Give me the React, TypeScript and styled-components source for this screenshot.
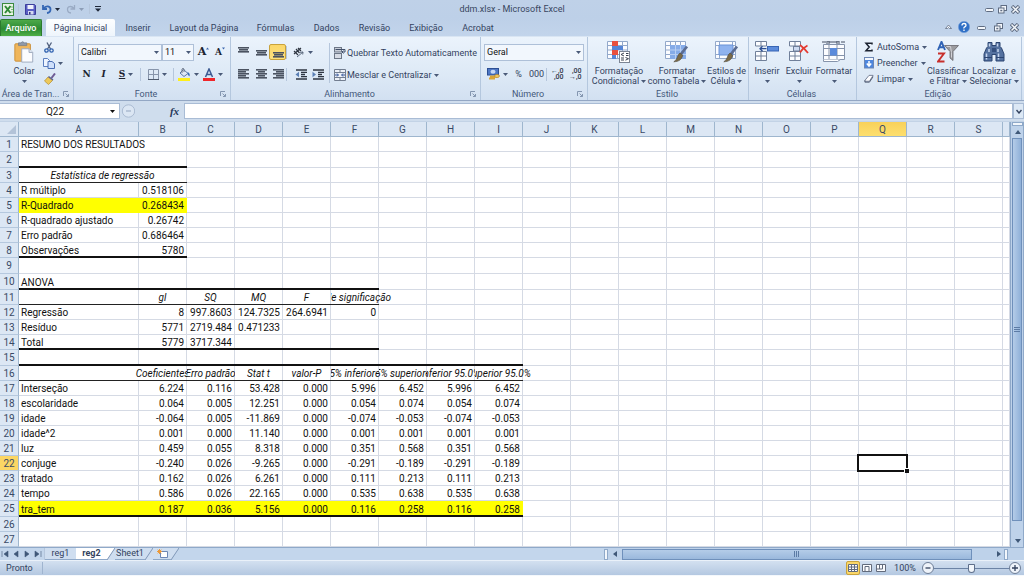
import React from "react";
import styled, { createGlobalStyle, css } from "styled-components";

const GlobalStyle = createGlobalStyle`
  *, *::before, *::after { box-sizing: border-box; }
  html, body { margin: 0; padding: 0; background: #fff; }
  body { font-family: Roboto, "Noto Sans", sans-serif; font-size: 9px; color: #33425e; overflow: hidden; }
  button, input, select { font: inherit; color: inherit; margin: 0; padding: 0; border: 0; background: none; border-radius: 0; }
  h1 { margin: 0; font-weight: 400; }
`;

/* ---------- shared parts ---------- */

const Window = styled.div`
  display: flex;
  flex-direction: column;
  min-height: 100vh;
  background: #fff;
`;

const Icon = styled.svg`
  display: block;
  flex: none;
`;

const Caret = ({ color = "#4a5a78" }: { color?: string }) => (
  <Icon width="5" height="3" viewBox="0 0 5 3" aria-hidden="true">
    <path d="M0 0h5L2.5 3z" fill={color} />
  </Icon>
);

const Row = styled.div<{ $gap?: number }>`
  display: flex;
  align-items: center;
  gap: ${(p) => p.$gap ?? 0}px;
`;

const ToolButton = styled.button<{ $w?: number; $active?: boolean }>`
  display: flex;
  align-items: center;
  justify-content: center;
  gap: 3px;
  width: ${(p) => p.$w ?? 17}px;
  height: 16px;
  flex: none;
  ${(p) =>
    p.$active &&
    css`
      background: linear-gradient(#fbd769, #fde17e);
      border: 1px solid #c9a33c;
      border-radius: 2px;
    `}
`;

const Separator = styled.span<{ $h?: number }>`
  width: 1px;
  height: ${(p) => p.$h ?? 13}px;
  flex: none;
  background: #b5c6dc;
`;

/* ---------- title bar ---------- */

const TitleBar = styled.header`
  display: grid;
  grid-template-columns: 1fr auto 1fr;
  align-items: center;
  height: 18px;
  padding: 0 2px;
  background: linear-gradient(#bfd1e8, #bdd0e8);
`;

const Title = styled.h1`
  font-size: 9px;
  line-height: 12px;
  color: #38465f;
`;

const WindowButtons = styled.div`
  display: flex;
  align-items: center;
  justify-content: flex-end;
`;

const MinimizeIcon = () => (
  <Icon width="9" height="9" viewBox="0 0 9 9">
    <rect x="0.5" y="3.5" width="8" height="3" rx="1" fill="#f4f7fb" stroke="#5f6c82" />
  </Icon>
);
const RestoreIcon = () => (
  <Icon width="9" height="9" viewBox="0 0 9 9">
    <rect x="3" y="0.5" width="5.5" height="5" fill="#f4f7fb" stroke="#5f6c82" />
    <rect x="0.5" y="3" width="5.5" height="5" fill="#f4f7fb" stroke="#5f6c82" />
    <rect x="2.3" y="4.8" width="2" height="1.5" fill="#5f6c82" />
  </Icon>
);
const CloseIcon = () => (
  <Icon width="9" height="9" viewBox="0 0 9 9">
    <path d="M1 1l7 7M8 1l-7 7" stroke="#5f6c82" strokeWidth="3.4" />
    <path d="M1.5 1.5l6 6M7.5 1.5l-6 6" stroke="#f4f7fb" strokeWidth="1.5" />
  </Icon>
);

const ExcelLogo = () => (
  <Icon width="12" height="13" viewBox="0 0 12 13">
    <rect x="0.5" y="0.5" width="11" height="12" fill="#e9f3e6" stroke="#3c8a3f" />
    <path d="M3 3l5.5 7M8.5 3L3 10" stroke="#2f8a35" strokeWidth="2" />
    <path d="M9 4h2M9 6.500h2M9 9h2" stroke="#7dba7d" />
  </Icon>
);
const SaveIcon = () => (
  <Icon width="11" height="11" viewBox="0 0 11 11">
    <path d="M0.500 0.500h9l1 1v9h-10z" fill="#5a5fc4" stroke="#3c3f9c" />
    <rect x="2.500" y="1" width="6" height="4" fill="#eef1fb" />
    <rect x="3" y="7" width="5.500" height="3.500" fill="#d5daf0" />
    <rect x="4" y="8" width="1.500" height="2.500" fill="#33357c" />
  </Icon>
);
const UndoIcon = ({ color }: { color: string }) => (
  <Icon width="10" height="10" viewBox="0 0 10 10">
    <path d="M1 1v4h4M1.500 4.500C4 1 8.500 2 8.500 5.200C8.500 7.500 7 8.800 5 9" fill="none" stroke={color} strokeWidth="1.8" />
  </Icon>
);
const RedoIcon = ({ color }: { color: string }) => (
  <Icon width="10" height="10" viewBox="0 0 10 10">
    <path d="M8.500 1v4h-4M8 4.500C5.500 1.500 1.500 2 1.500 5.200C1.500 7.500 3 8.800 5 9" fill="none" stroke={color} strokeWidth="1.3" />
  </Icon>
);
const CustomizeIcon = () => (
  <Icon width="6" height="6" viewBox="0 0 6 6">
    <path d="M0 0.500h6" stroke="#1f2838" />
    <path d="M0 2.500h6L3 5.700z" fill="#1f2838" />
  </Icon>
);

/* ---------- ribbon tabs ---------- */

const TabBar = styled.nav`
  display: flex;
  align-items: flex-end;
  height: 18px;
  padding-right: 2px;
  background: linear-gradient(#bdd0e8, #c2d4eb);
`;

const FileTab = styled.button`
  height: 17px;
  width: 42px;
  margin-right: 4px;
  font-weight: 500;
  color: #fff;
  border: 1px solid #2b7a2d;
  border-bottom: 0;
  border-radius: 2px 2px 0 0;
  background: linear-gradient(#4ea94a, #2c8a33 55%, #4fae45);
`;

const RibbonTab = styled.button<{ $active?: boolean; $w: number }>`
  width: ${(p) => p.$w}px;
  height: 17px;
  flex: none;
  white-space: nowrap;
  border-radius: 2px 2px 0 0;
  ${(p) => p.$active && "background: linear-gradient(#fdfeff, #eef5fc);"}
`;

const TabBarTools = styled.div`
  display: flex;
  align-items: center;
  align-self: center;
  margin-left: auto;
`;

/* ---------- ribbon ---------- */

const Ribbon = styled.section`
  display: flex;
  height: 65px;
  background: linear-gradient(#ebf3fc, #dde9f6 60%, #d2e0f1);
  border-top: 1px solid #d9e5f3;
  border-bottom: 1px solid #93a7c4;
`;

const Group = styled.section<{ $w: number }>`
  display: flex;
  flex-direction: column;
  width: ${(p) => p.$w}px;
  flex: none;
  border-right: 1px solid #b4c7de;
`;

const GroupBody = styled.div<{ $pad?: number }>`
  display: flex;
  flex: 1;
  padding: 2px ${(p) => p.$pad ?? 4}px 0;
`;

const GroupFooter = styled.div`
  display: flex;
  align-items: center;
  height: 13px;
  padding-right: 2px;
  line-height: 12px;
  text-align: center;
  white-space: nowrap;
  color: #44587a;
  & > span { flex: 1; }
`;

const LauncherButton = styled.button`
  display: grid;
  place-items: center;
  width: 10px;
  height: 9px;
`;

const Launcher = ({ name }: { name: string }) => (
  <LauncherButton aria-label={`Opções de ${name}`}>
    <Icon width="6" height="6" viewBox="0 0 6 6">
      <path d="M0.500 5V0.500H5M2.500 2.500l3 3M5.500 3v2.500H3" fill="none" stroke="#8496b0" />
    </Icon>
  </LauncherButton>
);

const Footer = ({ name, launcher }: { name: string; launcher?: boolean }) => (
  <GroupFooter>
    <span>{name}</span>
    {launcher && <Launcher name={name} />}
  </GroupFooter>
);

const Stack = styled.div<{ $w?: number }>`
  display: flex;
  flex-direction: column;
  padding-top: 2px;
  ${(p) => (p.$w ? `width: ${p.$w}px; flex: none;` : "flex: 1;")}
  & > ${Row} { height: 22px; }
`;

const SmallStack = styled.div<{ $w?: number }>`
  display: flex;
  flex-direction: column;
  ${(p) => p.$w && `width: ${p.$w}px; flex: none;`}
`;

const BigButton = styled.button<{ $w: number }>`
  display: flex;
  flex-direction: column;
  align-items: center;
  width: ${(p) => p.$w}px;
  height: 48px;
  flex: none;
  line-height: 10px;
  white-space: nowrap;
  & > svg:first-child { height: 22px; margin: 2px 0 3px; }
`;

const BigLine = styled.span`
  display: flex;
  align-items: center;
  gap: 2px;
  min-height: 10px;
`;

const TextButton = styled.button<{ $gap?: number }>`
  display: flex;
  align-items: center;
  gap: ${(p) => p.$gap ?? 3}px;
  height: 16px;
  white-space: nowrap;
`;

const SelectBox = styled.label<{ $w: number }>`
  position: relative;
  display: block;
  width: ${(p) => p.$w}px;
  flex: none;
  & > svg { position: absolute; right: 3px; top: 7px; pointer-events: none; }
`;

const Select = styled.select`
  display: block;
  appearance: none;
  width: 100%;
  height: 17px;
  padding: 0 2px;
  color: #111;
  background: #f2f7fd;
  border: 1px solid #aec0d8;
`;

const Glyph = styled.span<{ $size?: number; $style?: "italic" | "underline" }>`
  font-family: "DejaVu Serif", "Liberation Serif", serif;
  font-weight: 700;
  font-size: ${(p) => p.$size ?? 9}px;
  line-height: 12px;
  color: #1c2330;
  ${(p) => p.$style === "italic" && "font-style: italic;"}
  ${(p) => p.$style === "underline" && "text-decoration: underline;"}
`;

const Lines = ({ w, y = 0 }: { w: [number, number][]; y?: number }) => (
  <Icon width="12" height="11" viewBox="0 0 12 11">
    {w.map(([x, len], i) => (
      <rect key={i} x={x} y={y + i * 2} width={len} height="1.600" fill="#4b5361" />
    ))}
  </Icon>
);

const PasteIcon = () => (
  <Icon width="22" height="24" viewBox="0 0 22 24">
    <rect x="1" y="3" width="17" height="19" rx="1" fill="#efb65c" stroke="#c98c35" />
    <path d="M5 5V2h2.500q2-2.500 4 0H14v3z" fill="#8f99a8" stroke="#6e7888" strokeWidth="0.700" />
    <path d="M8.500 8.500h8l4 4v10.500h-12z" fill="#fbfcff" stroke="#9aa6bb" />
    <path d="M16.500 8.500v4h4" fill="#dfe6f2" stroke="#9aa6bb" />
  </Icon>
);
const CutIcon = () => (
  <Icon width="10" height="11" viewBox="0 0 10 11">
    <path d="M3 0.500L6.500 7M7.500 0.500L3.500 7" stroke="#4f5f7d" strokeWidth="1.300" />
    <circle cx="2.500" cy="8.500" r="1.700" fill="none" stroke="#2d5fae" strokeWidth="1.300" />
    <circle cx="7.500" cy="8.500" r="1.700" fill="none" stroke="#2d5fae" strokeWidth="1.300" />
  </Icon>
);
const CopyIcon = () => (
  <Icon width="12" height="11" viewBox="0 0 12 11">
    <path d="M0.500 0.500h4l2 2v6h-6z" fill="#eef4ff" stroke="#5c7fc0" />
    <path d="M5 3.500h4l2.500 2v5H5z" fill="#cfe0fb" stroke="#4a6fb5" />
  </Icon>
);
const BrushIcon = () => (
  <Icon width="12" height="12" viewBox="0 0 12 12">
    <path d="M11 0.500L7.500 5" stroke="#6d5a94" strokeWidth="2" />
    <path d="M4 4l4.500 3.500L4.500 11.500L0.500 8z" fill="#edc95a" stroke="#b48c2d" strokeWidth="0.700" />
    <path d="M4.500 3.500l4.500 3.500" stroke="#59618c" strokeWidth="1.400" />
  </Icon>
);
const BordersIcon = () => (
  <Icon width="11" height="11" viewBox="0 0 11 11">
    <path d="M0.500 0.500h10v10h-10zM5.500 0v11M0 5.500h11" fill="none" stroke="#8795ab" />
    <path d="M0 10.500h11" stroke="#4c586b" />
  </Icon>
);
const BucketIcon = () => (
  <Icon width="13" height="13" viewBox="0 0 13 13">
    <path d="M5.500 1.500l4.500 4L6 8.500L2 5z" fill="#dfe8f5" stroke="#5d79a5" />
    <path d="M4 5V1q1.500-1.500 2 0v3" fill="none" stroke="#6d7787" />
    <path d="M9.500 4q3 1 2 4.500q-2-1-2-4.500" fill="#3c6fb9" />
    <rect x="0" y="10" width="12" height="3" fill="#ffef1a" />
  </Icon>
);
const FontColorIcon = () => (
  <Icon width="12" height="13" viewBox="0 0 12 13">
    <path d="M2.500 9L6 1l3.500 8M4 6.500h4" fill="none" stroke="#3c5a92" strokeWidth="1.500" />
    <rect x="0" y="10" width="12" height="3" fill="#f0262a" />
  </Icon>
);
const OrientationIcon = () => (
  <Icon width="12" height="11" viewBox="0 0 12 11">
    <path d="M1 4l4 4M3 2l3.500 4M5 1l3 3M1 7l7-6" fill="none" stroke="#2f3642" strokeWidth="1.200" />
    <path d="M4 10l6-5M10 5l-3 0.300M10 5l-0.300 2.500" fill="none" stroke="#5d6b80" />
  </Icon>
);
const IndentIcon = ({ out }: { out?: boolean }) => (
  <Icon width="12" height="11" viewBox="0 0 12 11">
    <path d="M1 1h11M6 3.300h6M6 5.500h4M6 7.700h6M1 10h11" stroke="#2f3642" strokeWidth="1.300" />
    <path d={out ? "M4 2.800v5.400L0.500 5.500z" : "M0.500 2.800v5.400L4 5.500z"} fill="#5a7fb5" />
  </Icon>
);
const WrapIcon = () => (
  <Icon width="12" height="12" viewBox="0 0 12 12">
    <rect x="0.500" y="0.500" width="7" height="4.500" fill="#c9cfd9" stroke="#6d7787" />
    <rect x="0.500" y="6.500" width="7" height="5" fill="#d7dce5" stroke="#6d7787" />
    <path d="M1.500 2.500h9.500v2.500H8M9.500 3.500L8 5l1.500 1.500" fill="none" stroke="#42506a" />
  </Icon>
);
const MergeIcon = () => (
  <Icon width="12" height="12" viewBox="0 0 12 12">
    <path d="M0.500 0.500h11v11h-11zM0 3.500h12M0 8.500h12M6 0v3M6 9v3" fill="#eef2f8" stroke="#737e90" />
    <path d="M1 6h3M3 4.500L4.500 6L3 7.500M11 6H8M9 4.500L7.500 6L9 7.500" fill="none" stroke="#2d4f93" />
  </Icon>
);
const CurrencyIcon = () => (
  <Icon width="13" height="12" viewBox="0 0 13 12">
    <rect x="0.500" y="0.500" width="11" height="6.500" fill="#4f78c4" stroke="#2c4f94" />
    <ellipse cx="6" cy="3.700" rx="2.500" ry="2" fill="#c5d7f4" />
    <path d="M3 8.500h7M2 10.500h6" stroke="#d9a536" strokeWidth="1.800" />
    <ellipse cx="10" cy="8" rx="2.500" ry="1.500" fill="#f2cb62" stroke="#b78427" strokeWidth="0.700" />
  </Icon>
);
const DecimalText = styled.span`
  display: flex;
  flex-direction: column;
  align-items: flex-end;
  width: 13px;
  font-weight: 500;
  font-size: 7px;
  line-height: 6px;
  color: #2d3748;
`;

const gridLines = "M0.500 0.500h20v17h-20zM0 4.500h21M0 9h21M0 13.500h21M5.500 0v18M10.500 0v18M15.500 0v18";

const ConditionalIcon = () => (
  <Icon width="24" height="22" viewBox="0 0 24 22">
    <path d={gridLines} fill="#fbfcff" stroke="#93a9cb" />
    <path d="M5 0h6v5H5zM5 9h6v5H5z" fill="#e8503e" />
    <path d="M5 5h11v4H5zM5 14h4v4H5z" fill="#5685d6" />
    <rect x="12.500" y="10.500" width="10" height="11" fill="#fff" stroke="#7c8594" />
    <path d="M17 12l-3 1.500l3 1.500M18.500 16.500l3 1.200l-3 1.500M19 12.500h2.500M19 14.500h2.500M14 17h3M14 19h3" fill="none" stroke="#3a4250" />
  </Icon>
);
const Brush = () => (
  <>
    <path d="M22 5.500L16 13" stroke="#5b6c92" strokeWidth="2.800" />
    <path d="M15 12l2.800 2.300q-1.500 6.500-9 6.500q3-2 3.500-4.500q0.700-3 2.700-4.300" fill="#7a6a48" stroke="#4c4535" strokeWidth="0.600" />
  </>
);
const TableFormatIcon = () => (
  <Icon width="24" height="22" viewBox="0 0 24 22">
    <path d={gridLines} fill="#fbfcff" stroke="#93a9cb" />
    <path d="M5 4h16v14H5z" fill="#85abe8" />
    <path d="M5 9h16M5 13.500h16M10.500 4v14M15.500 4v14" stroke="#b8cff3" />
    <Brush />
  </Icon>
);
const CellStylesIcon = () => (
  <Icon width="24" height="22" viewBox="0 0 24 22">
    <path d="M0.500 0.500h20v17h-20zM0 4.500h21M0 13.500h21M4.500 0v18M17.500 0v18" fill="#fbfcff" stroke="#93a9cb" />
    <path d="M4 4h14v10H4z" fill="#8fb3ef" stroke="#6b93d6" />
    <Brush />
  </Icon>
);
const CellStack = () => (
  <path d="M0.500 0.500h11v4.500h-11zM6 0v5M0.500 10.500h11v9h-11zM0 15h12M6 10v10" fill="#fcfdff" stroke="#71809a" />
);
const InsertCellsIcon = () => (
  <Icon width="24" height="22" viewBox="0 0 24 22">
    <CellStack />
    <rect x="12.500" y="5.500" width="11" height="4.500" fill="#5b8bdb" stroke="#3865b4" />
    <path d="M11.500 7.700H5M7.500 5.200L5 7.700l2.500 2.500" fill="none" stroke="#2c4f94" strokeWidth="1.300" />
  </Icon>
);
const DeleteCellsIcon = () => (
  <Icon width="20" height="22" viewBox="0 0 20 22">
    <CellStack />
    <rect x="4.500" y="5.500" width="6" height="4.500" fill="#cfdcf3" stroke="#71809a" />
    <path d="M11 4q4 3 8 8M18.500 4.500q-5 2.500-7.500 7" fill="none" stroke="#e33b32" strokeWidth="1.800" />
  </Icon>
);
const FormatCellsIcon = () => (
  <Icon width="24" height="22" viewBox="0 0 24 22">
    <path d="M1.500 3.500h21v15h-21zM1 7.500h22M1 14.500h22M7 3v16M15 3v16" fill="#fcfdff" stroke="#8593ab" />
    <path d="M5 3V0h2v3M15 3V0h2v3M7 1h8M19 1h4M0 1h4" fill="none" stroke="#444f62" />
    <rect x="8" y="7" width="7" height="7.500" fill="#5b8bdb" />
    <path d="M1.500 18.500v2h14l3-2" fill="#fff" stroke="#8593ab" />
  </Icon>
);
const FillDownIcon = () => (
  <Icon width="10" height="12" viewBox="0 0 10 12">
    <rect x="0.500" y="0.500" width="9" height="10.500" fill="#4d86de" stroke="#6d87b5" />
    <rect x="1" y="1" width="8" height="2" fill="#f5f8fd" />
    <path d="M5 4v4M2.800 6.500L5 9l2.200-2.500" fill="none" stroke="#fff" strokeWidth="1.500" />
  </Icon>
);
const EraserIcon = () => (
  <Icon width="10" height="10" viewBox="0 0 11 10">
    <path d="M1 6.500L5.500 1h4.500L6 7.500H1z" fill="#fdfdff" stroke="#6d7890" />
    <path d="M1 6.500v2h5l4-6" fill="none" stroke="#4d5870" />
  </Icon>
);
const SumIcon = () => (
  <Icon width="10" height="10" viewBox="0 0 10 10">
    <path d="M8 2.500V1.300H2L5.200 5L2 8.700h6V7.500" fill="none" stroke="#1c2330" strokeWidth="1.500" />
  </Icon>
);
const SortFilterIcon = () => (
  <Icon width="22" height="22" viewBox="0 0 22 22">
    <path d="M1 9L4.500 0.800L8 9M2.500 6.300h4" fill="none" stroke="#2f62b4" strokeWidth="1.900" />
    <path d="M1 12.500h6L1 20.500h6.500" fill="none" stroke="#c8302c" strokeWidth="1.900" />
    <path d="M7.500 4.500h14l-5.500 6v9l-3-2.500v-6.500z" fill="#9b9b9f" stroke="#66666c" strokeWidth="0.800" />
    <path d="M9.500 5.500h4l1 6v5" fill="none" stroke="#d3d3d8" />
  </Icon>
);
const BinocularsIcon = () => (
  <Icon width="22" height="22" viewBox="0 0 22 22">
    <path d="M5 1.500h4v3h4v-3h4v4l1.500 1.500L21 13v7h-8v-6.500H9V20H1v-7l2.500-6L5 5.500z" fill="#54719f" stroke="#2b4470" />
    <path d="M6.500 2.500v3M3.500 12.500v6M14.500 2.500v3M15.500 12.500v6M6 8v3M15 8v3" stroke="#c5d5ee" strokeWidth="1.500" />
    <path d="M9 7h4v4H9z" fill="#35507f" />
    <path d="M1 16.500h8M13 16.500h8" stroke="#2b4470" />
  </Icon>
);

/* ---------- formula bar ---------- */

const FormulaBar = styled.section`
  display: flex;
  height: 21px;
  padding: 2px 0;
  background: #cfdded;
  border-bottom: 1px solid #c3d3e6;
`;

const NameBox = styled.label`
  display: flex;
  align-items: center;
  width: 120px;
  flex: none;
  padding-right: 4px;
  background: #fff;
  border: 1px solid #a9bcd5;
  border-left: 0;
`;

const NameInput = styled.input`
  flex: 1;
  min-width: 0;
  height: 14px;
  text-align: center;
  font-size: 10px;
  color: #222;
`;

const FormulaTools = styled.div`
  display: flex;
  align-items: center;
  justify-content: space-between;
  width: 64px;
  flex: none;
  padding: 0 4px 0 1px;
`;

const FxButton = styled.button`
  width: 11px;
  font-family: "Liberation Serif", serif;
  font-style: italic;
  font-weight: 700;
  font-size: 11px;
  line-height: 14px;
  color: #26375a;
`;

const FormulaInput = styled.input`
  flex: 1;
  min-width: 0;
  padding: 0 4px;
  background: #fff;
  border: 1px solid #a9bcd5;
`;

const ExpandButton = styled.button`
  display: grid;
  place-items: center;
  width: 11px;
  border: 1px solid #a9bcd5;
  background: #dce8f5;
`;

/* ---------- worksheet ---------- */

const SheetArea = styled.main`
  display: flex;
  flex: 1;
  border-right: 1px solid #8fa9c9;
`;

const GridViewport = styled.div`
  flex: 1;
  min-width: 0;
  overflow: hidden;
`;

const Grid = styled.table`
  width: 100%;
  min-width: 990px;
  table-layout: fixed;
  border-collapse: separate;
  border-spacing: 0;
  font-size: 10px;
  line-height: 13px;
  color: #111;
`;

const Col = styled.col<{ $w?: number }>`
  ${(p) => p.$w && `width: ${p.$w}px;`}
`;

const ColumnHead = styled.th<{ $active?: boolean }>`
  height: 15px;
  padding: 0;
  font-weight: 400;
  color: #3a4a66;
  text-align: center;
  border-right: 1px solid #9eb6ce;
  border-bottom: 1px solid #9eb6ce;
  background: ${(p) => (p.$active ? "linear-gradient(#f8d15a, #fddf6e)" : "#dce7f4")};
`;

const RowHead = styled.th<{ $active?: boolean }>`
  padding: 0;
  font-weight: 400;
  color: #3a4a66;
  text-align: center;
  border-right: 1px solid #9eb6ce;
  border-bottom: 1px solid #b5c8de;
  background: ${(p) => (p.$active ? "#fbd664" : "#dce7f4")};
`;

const GridRow = styled.tr<{ $tall?: boolean }>`
  height: ${(p) => (p.$tall ? 16 : 15)}px;
`;

type Edge = "thick" | "thin";

/* Rules are inset shadows so that neighbouring cells join without a notch. */
const Cell = styled.td<{ $edge?: Edge; $fill?: boolean; $num?: boolean; $spill?: boolean }>`
  position: relative;
  padding: 0 3px 0 2px;
  white-space: nowrap;
  text-align: ${(p) => (p.$num ? "right" : "left")};
  background: ${(p) => (p.$fill ? "#ffff00" : "#fff")};
  box-shadow: ${(p) => {
    const bottom = p.$edge === "thick" ? "inset 0 -2px #111" : p.$edge === "thin" ? "inset 0 -1px #222" : p.$fill ? "" : "inset 0 -1px #d5dae4";
    const right = p.$fill || p.$spill ? "" : "inset -1px 0 #d5dae4";
    return [bottom, right].filter(Boolean).join(", ") || "none";
  }};
  ${(p) => p.$spill && "z-index: 1;"}
`;

/* A heading wider than its column is cut at both edges, or spills where the neighbour is empty. */
const Heading = styled.div<{ $open?: "left" | "right" }>`
  position: relative;
  z-index: 2;
  display: flex;
  justify-content: center;
  margin: 0 -3px 0 -2px;
  padding-right: 1px;
  font-style: italic;
  ${(p) =>
    p.$open
      ? `clip-path: inset(0 ${p.$open === "right" ? "-40px" : "0"} 0 ${p.$open === "left" ? "-40px" : "0"});`
      : "overflow: hidden;"}
`;

const Selection = styled.div`
  position: absolute;
  inset: -2px -1px -1px -2px;
  z-index: 1;
  border: 2px solid #111;
  &::after {
    content: "";
    position: absolute;
    right: -3px;
    bottom: -3px;
    width: 4px;
    height: 4px;
    background: #111;
    border-left: 1px solid #fff;
    border-top: 1px solid #fff;
    box-sizing: content-box;
  }
`;

const letters = "ABCDEFGHIJKLMNOPQRS".split("");

const data: Record<number, string[]> = {
  1: ["RESUMO DOS RESULTADOS"],
  3: ["Estatística de regressão"],
  4: ["R múltiplo", "0.518106"],
  5: ["R-Quadrado", "0.268434"],
  6: ["R-quadrado ajustado", "0.26742"],
  7: ["Erro padrão", "0.686464"],
  8: ["Observações", "5780"],
  10: ["ANOVA"],
  11: ["", "gl", "SQ", "MQ", "F", "F de significação"],
  12: ["Regressão", "8", "997.8603", "124.7325", "264.6941", "0"],
  13: ["Resíduo", "5771", "2719.484", "0.471233"],
  14: ["Total", "5779", "3717.344"],
  16: ["", "Coeficientes", "Erro padrão", "Stat t", "valor-P", "95% inferiores", "95% superiores", "Inferior 95.0%", "Superior 95.0%"],
  17: ["Interseção", "6.224", "0.116", "53.428", "0.000", "5.996", "6.452", "5.996", "6.452"],
  18: ["escolaridade", "0.064", "0.005", "12.251", "0.000", "0.054", "0.074", "0.054", "0.074"],
  19: ["idade", "-0.064", "0.005", "-11.869", "0.000", "-0.074", "-0.053", "-0.074", "-0.053"],
  20: ["idade^2", "0.001", "0.000", "11.140", "0.000", "0.001", "0.001", "0.001", "0.001"],
  21: ["luz", "0.459", "0.055", "8.318", "0.000", "0.351", "0.568", "0.351", "0.568"],
  22: ["conjuge", "-0.240", "0.026", "-9.265", "0.000", "-0.291", "-0.189", "-0.291", "-0.189"],
  23: ["tratado", "0.162", "0.026", "6.261", "0.000", "0.111", "0.213", "0.111", "0.213"],
  24: ["tempo", "0.586", "0.026", "22.165", "0.000", "0.535", "0.638", "0.535", "0.638"],
  25: ["tra_tem", "0.187", "0.036", "5.156", "0.000", "0.116", "0.258", "0.116", "0.258"],
};

/* Bottom rules: row number -> style and how many columns it runs under. */
const rules: Record<number, { edge: Edge; span: number }> = {
  2: { edge: "thick", span: 2 },
  3: { edge: "thin", span: 2 },
  8: { edge: "thick", span: 2 },
  10: { edge: "thick", span: 6 },
  11: { edge: "thin", span: 6 },
  14: { edge: "thick", span: 6 },
  15: { edge: "thick", span: 9 },
  16: { edge: "thin", span: 9 },
  25: { edge: "thick", span: 9 },
};
const filled: Record<number, number> = { 5: 2, 25: 9 };
const tallRows = new Set([2, 9, 10, 15, 25]);

const SheetRow = ({ n }: { n: number }) => {
  const values = data[n] ?? [];
  const rule = rules[n];
  const cells: React.ReactNode[] = [];
  for (let c = 0; c < 20; c++) {
    const value = values[c] ?? "";
    const heading = (n === 11 || n === 16) && c > 0 && value;
    const last = c === values.length - 1;
    if (n === 3 && c === 0) {
      cells.push(
        <Cell key={c} colSpan={2} $edge="thin">
          <Heading>{value}</Heading>
        </Cell>,
      );
      c = 1;
      continue;
    }
    cells.push(
      <Cell
        key={c}
        $edge={rule && c < rule.span ? rule.edge : undefined}
        $fill={c < (filled[n] ?? 0)}
        $num={c > 0 && !heading}
        $spill={(n === 1 && c === 0) || (n === 16 && c === 0)}
      >
        {heading ? <Heading $open={last ? "right" : c === 1 ? "left" : undefined}>{value}</Heading> : value}
        {n === 22 && c === 16 && <Selection />}
      </Cell>,
    );
  }
  return (
    <GridRow $tall={tallRows.has(n)}>
      <RowHead scope="row" $active={n === 22}>
        {n}
      </RowHead>
      {cells}
    </GridRow>
  );
};

/* ---------- scroll bars ---------- */

const VScroll = styled.div`
  display: flex;
  flex-direction: column;
  width: 13px;
  flex: none;
  padding: 0 1px;
  background: #bed2ea;
  border-left: 1px solid #8fa9c9;
`;

const HScroll = styled.div`
  display: flex;
  align-items: center;
  flex: 1;
  padding: 1px 16px 1px 0;
  background: #bed2ea;
`;

const ScrollButton = styled.button<{ $w?: number }>`
  display: grid;
  place-items: center;
  width: ${(p) => p.$w ?? 11}px;
  height: 12px;
  flex: none;
`;

const SplitHandle = styled.span<{ $vertical?: boolean }>`
  flex: none;
  width: ${(p) => (p.$vertical ? 4 : 11)}px;
  height: ${(p) => (p.$vertical ? 11 : 4)}px;
  background: #f2f6fb;
  border: 1px solid #8fa9c9;
`;

const VThumb = styled.div`
  display: grid;
  place-items: center;
  flex: 1;
  margin-bottom: 14px;
  background: linear-gradient(90deg, #b4cce8, #8fb0d8);
  border: 1px solid #6f90bb;
`;

const HThumb = styled.div`
  display: grid;
  place-items: center;
  flex: 1;
  height: 11px;
  margin-right: 21px;
  background: linear-gradient(#b4cce8, #9ab8dc);
  border: 1px solid #6f90bb;
`;

const Arrow = ({ dir }: { dir: "up" | "down" | "left" | "right" }) => {
  const d = { up: "M0 5h6L3 1z", down: "M0 1h6L3 5z", left: "M5 0v6L1 3z", right: "M1 0v6l4-3z" }[dir];
  return (
    <Icon width="6" height="6" viewBox="0 0 6 6">
      <path d={d} fill="#3f5878" />
    </Icon>
  );
};

/* ---------- sheet tabs ---------- */

const BottomBar = styled.div`
  display: flex;
  height: 13px;
  border-top: 1px solid #8fa9c9;
  background: #c3d6ec;
`;

const SheetTabs = styled.div`
  display: flex;
  flex: 0 0 59%;
`;

const NavButton = styled.button`
  display: grid;
  place-items: center;
  width: 10px;
  height: 12px;
  margin-right: 1px;
`;

const SheetTab = styled.button<{ $active?: boolean; $w: number }>`
  width: ${(p) => p.$w}px;
  height: 12px;
  line-height: 11px;
  font-weight: ${(p) => (p.$active ? 700 : 400)};
  background: ${(p) => (p.$active ? "#fff" : "#cfdef0")};
  border-bottom: 1px solid #8fa9c9;
  display: grid;
  place-items: center;
`;

const SlantEdge = styled.svg`
  display: block;
  flex: none;
  width: 8px;
  height: 12px;
`;

const Slant = ({ left, right }: { left: string; right: string }) => (
  <SlantEdge viewBox="0 0 8 12">
    <path d="M0 0h8L0 12z" fill={left} />
    <path d="M8 0v12H0z" fill={right} />
    <path d="M8 0L0 12" stroke="#8098b8" />
  </SlantEdge>
);

const nav = [
  ["Primeira planilha", "M1 1v6M7 1v6L3 4z"],
  ["Planilha anterior", "M6 1v6L2 4z"],
  ["Próxima planilha", "M2 1v6l4-3z"],
  ["Última planilha", "M1 1v6l4-3zM7 1v6"],
];

/* ---------- status bar ---------- */

const StatusBar = styled.footer`
  display: flex;
  align-items: center;
  height: 16px;
  padding: 0 3px 0 6px;
  background: linear-gradient(#d3e0f0, #b4c8e1);
  border-top: 1px solid #eaf1f9;
  border-bottom: 1px solid #f4f8fc;
`;

const StatusText = styled.span`
  padding-right: 9px;
  border-right: 1px solid #9fb4cf;
  line-height: 12px;
`;

const StatusRight = styled.div`
  display: flex;
  align-items: center;
  margin-left: auto;
`;

const ViewButton = styled.button<{ $active?: boolean }>`
  display: grid;
  place-items: center;
  width: 14px;
  height: 14px;
  ${(p) => p.$active && "background: #fbd769; border: 1px solid #c9a33c; border-radius: 2px;"}
`;

const ViewIcon = ({ d }: { d: string }) => (
  <Icon width="10" height="8" viewBox="0 0 10 8">
    <path d={d} fill="#fbfcfe" stroke="#626b7c" />
  </Icon>
);

const ZoomLabel = styled.label`
  width: 34px;
  text-align: center;
  line-height: 12px;
`;

const RoundButton = styled.button`
  display: grid;
  place-items: center;
  width: 12px;
  height: 12px;
  border-radius: 50%;
  border: 1px solid #6c7c95;
  background: #eef3fa;
`;

const ZoomSlider = styled.input`
  appearance: none;
  width: 75px;
  height: 12px;
  background: linear-gradient(#6c83a5, #6c83a5) center / 100% 1px no-repeat;
  &::-webkit-slider-thumb {
    appearance: none;
    width: 7px;
    height: 9px;
    border: 1px solid #5e6f8b;
    border-radius: 1px 1px 4px 4px;
    background: #f2f6fb;
  }
`;

const ribbonTabs: [string, number][] = [
  ["Inserir", 46],
  ["Layout da Página", 86],
  ["Fórmulas", 57],
  ["Dados", 45],
  ["Revisão", 51],
  ["Exibição", 52],
  ["Acrobat", 52],
];

export default function App() {
  return (
    <Window>
      <GlobalStyle />
      <TitleBar>
        <Row $gap={4}>
          <ExcelLogo />
          <Separator $h={10} />
          <ToolButton aria-label="Salvar" $w={14}><SaveIcon /></ToolButton>
          <ToolButton aria-label="Desfazer" $w={20}><UndoIcon color="#3567b4" /><Caret color="#1f2838" /></ToolButton>
          <ToolButton aria-label="Refazer" $w={20}><RedoIcon color="#9aabc4" /><Caret color="#8c9db6" /></ToolButton>
          <Separator $h={10} />
          <ToolButton aria-label="Personalizar" $w={8}><CustomizeIcon /></ToolButton>
        </Row>
        <Title>ddm.xlsx - Microsoft Excel</Title>
        <WindowButtons>
          <ToolButton aria-label="Minimizar" $w={14}><MinimizeIcon /></ToolButton>
          <ToolButton aria-label="Restaurar" $w={13}><RestoreIcon /></ToolButton>
          <ToolButton aria-label="Fechar" $w={13}><CloseIcon /></ToolButton>
        </WindowButtons>
      </TitleBar>

      <TabBar>
        <FileTab>Arquivo</FileTab>
        <RibbonTab $active $w={69}>Página Inicial</RibbonTab>
        {ribbonTabs.map(([name, w]) => (
          <RibbonTab key={name} $w={w}>{name}</RibbonTab>
        ))}
        <TabBarTools>
          <ToolButton aria-label="Minimizar faixa" $w={14}>
            <Icon width="7" height="6" viewBox="0 0 7 6"><path d="M0.500 4.500L3.500 1l3 3.500h-2L3.500 3.500l-1 1z" fill="#f4f7fb" stroke="#5f6c82" strokeWidth="0.800" /></Icon>
          </ToolButton>
          <ToolButton aria-label="Ajuda" $w={18}>
            <Icon width="12" height="12" viewBox="0 0 12 12">
              <circle cx="6" cy="6" r="5.700" fill="#2f6fc6" stroke="#7aa3dc" strokeWidth="0.600" />
              <path d="M4 4.500q0-2 2-2t2 1.800q0 1-1.200 1.600T6 7.500M6 8.600v1.400" fill="none" stroke="#fff" strokeWidth="1.300" />
            </Icon>
          </ToolButton>
          <ToolButton aria-label="Minimizar pasta"><MinimizeIcon /></ToolButton>
          <ToolButton aria-label="Restaurar pasta" $w={16}><RestoreIcon /></ToolButton>
          <ToolButton aria-label="Fechar pasta" $w={16}><CloseIcon /></ToolButton>
        </TabBarTools>
      </TabBar>

      <Ribbon>
        <Group $w={74}>
          <GroupBody $pad={5}>
            <BigButton $w={38}>
              <PasteIcon />
              <BigLine>Colar</BigLine>
              <BigLine><Caret /></BigLine>
            </BigButton>
            <SmallStack>
              <ToolButton aria-label="Recortar" $w={12}><CutIcon /></ToolButton>
              <ToolButton aria-label="Copiar" $w={20}><CopyIcon /><Caret /></ToolButton>
              <ToolButton aria-label="Pincel de formatação" $w={13}><BrushIcon /></ToolButton>
            </SmallStack>
          </GroupBody>
          <Footer name="Área de Tran..." launcher />
        </Group>

        <Group $w={157}>
          <GroupBody>
            <Stack>
              <Row>
                <SelectBox $w={84}><Select aria-label="Fonte" defaultValue="Calibri"><option>Calibri</option></Select><Caret /></SelectBox>
                <SelectBox $w={32}><Select aria-label="Tamanho da fonte" defaultValue="11"><option>11</option></Select><Caret /></SelectBox>
                <ToolButton aria-label="Aumentar fonte" $w={19}><Row><Glyph $size={11}>A</Glyph><Icon width="3" height="10" viewBox="0 0 3 10"><path d="M0 2.500L1.500 0.500L3 2.500z" fill="#3b65ad" /></Icon></Row></ToolButton>
                <ToolButton aria-label="Diminuir fonte" $w={14}><Row><Glyph>A</Glyph><Icon width="3" height="10" viewBox="0 0 3 10"><path d="M0 0.500L1.500 2.500L3 0.500z" fill="#3b65ad" /></Icon></Row></ToolButton>
              </Row>
              <Row>
                <ToolButton aria-label="Negrito"><Glyph>N</Glyph></ToolButton>
                <ToolButton aria-label="Itálico"><Glyph $style="italic">I</Glyph></ToolButton>
                <ToolButton aria-label="Sublinhado" $w={28}><Glyph $style="underline">S</Glyph><Caret /></ToolButton>
                <Separator />
                <ToolButton aria-label="Bordas" $w={32}><BordersIcon /><Caret /></ToolButton>
                <Separator />
                <ToolButton aria-label="Cor de preenchimento" $w={28}><BucketIcon /><Caret /></ToolButton>
                <ToolButton aria-label="Cor da fonte" $w={22}><FontColorIcon /><Caret /></ToolButton>
              </Row>
            </Stack>
          </GroupBody>
          <Footer name="Fonte" launcher />
        </Group>

        <Group $w={250}>
          <GroupBody $pad={3}>
            <Stack $w={95}>
              <Row>
                <ToolButton aria-label="Alinhar em cima" $w={18}><Lines w={[[1, 11], [2, 9], [1, 11]]} y={0} /></ToolButton>
                <ToolButton aria-label="Alinhar no meio"><Lines w={[[1, 11], [2, 9], [1, 11]]} y={3} /></ToolButton>
                <ToolButton aria-label="Alinhar embaixo" $active><Lines w={[[1, 11], [2, 9], [1, 11]]} y={5} /></ToolButton>
                <Row $gap={4}><Separator /><Separator $h={0} /></Row>
                <ToolButton aria-label="Orientação" $w={22}><OrientationIcon /><Caret /></ToolButton>
              </Row>
              <Row>
                <ToolButton aria-label="Alinhar à esquerda" $w={18}><Lines w={[[1, 11], [1, 8], [1, 11], [1, 8], [1, 11]]} /></ToolButton>
                <ToolButton aria-label="Centralizar"><Lines w={[[1, 11], [3, 7], [1, 11], [3, 7], [1, 11]]} /></ToolButton>
                <ToolButton aria-label="Alinhar à direita"><Lines w={[[1, 11], [4, 8], [1, 11], [4, 8], [1, 11]]} /></ToolButton>
                <Row $gap={4}><Separator /><Separator $h={0} /></Row>
                <ToolButton aria-label="Diminuir recuo"><IndentIcon out /></ToolButton>
                <ToolButton aria-label="Aumentar recuo"><IndentIcon /></ToolButton>
              </Row>
            </Stack>
            <Row $gap={4}>
              <Separator $h={40} />
              <Stack>
                <Row><TextButton $gap={1}><WrapIcon />Quebrar Texto Automaticamente</TextButton></Row>
                <Row><TextButton $gap={1}><MergeIcon />Mesclar e Centralizar <Separator $h={0} /><Caret /></TextButton></Row>
              </Stack>
            </Row>
          </GroupBody>
          <Footer name="Alinhamento" launcher />
        </Group>

        <Group $w={107}>
          <GroupBody $pad={3}>
            <Stack>
              <Row>
                <SelectBox $w={100}><Select aria-label="Formato de número" defaultValue="Geral"><option>Geral</option></Select><Caret /></SelectBox>
              </Row>
              <Row>
                <ToolButton aria-label="Formato de contabilização" $w={26}><CurrencyIcon /><Caret /></ToolButton>
                <ToolButton aria-label="Porcentagem">%</ToolButton>
                <ToolButton aria-label="Milhares" $w={19}>000</ToolButton>
                <Separator />
                <ToolButton aria-label="Aumentar casas decimais" $w={20}><DecimalText><span>←,0</span><span>,00</span></DecimalText></ToolButton>
                <ToolButton aria-label="Diminuir casas decimais" $w={16}><DecimalText><span>,00</span><span>→,0</span></DecimalText></ToolButton>
              </Row>
            </Stack>
          </GroupBody>
          <Footer name="Número" launcher />
        </Group>

        <Group $w={161}>
          <GroupBody $pad={3}>
            <BigButton $w={56}><ConditionalIcon /><BigLine>Formatação</BigLine><BigLine>Condicional <Caret /></BigLine></BigButton>
            <BigButton $w={60}><TableFormatIcon /><BigLine>Formatar</BigLine><BigLine>como Tabela <Caret /></BigLine></BigButton>
            <BigButton $w={39}><CellStylesIcon /><BigLine>Estilos de</BigLine><BigLine>Célula <Caret /></BigLine></BigButton>
          </GroupBody>
          <Footer name="Estilo" />
        </Group>

        <Group $w={108}>
          <GroupBody $pad={2}>
            <BigButton $w={32}><InsertCellsIcon /><BigLine>Inserir</BigLine><BigLine><Caret /></BigLine></BigButton>
            <BigButton $w={32}><DeleteCellsIcon /><BigLine>Excluir</BigLine><BigLine><Caret /></BigLine></BigButton>
            <BigButton $w={38}><FormatCellsIcon /><BigLine>Formatar</BigLine><BigLine><Caret /></BigLine></BigButton>
          </GroupBody>
          <Footer name="Células" />
        </Group>

        <Group $w={165}>
          <GroupBody $pad={7}>
            <SmallStack $w={62}>
              <TextButton><SumIcon />AutoSoma <Caret /></TextButton>
              <TextButton><FillDownIcon />Preencher <Caret /></TextButton>
              <TextButton><EraserIcon />Limpar <Caret /></TextButton>
            </SmallStack>
            <BigButton $w={44}><SortFilterIcon /><BigLine>Classificar</BigLine><BigLine>e Filtrar <Caret /></BigLine></BigButton>
            <BigButton $w={48}><BinocularsIcon /><BigLine>Localizar e</BigLine><BigLine>Selecionar <Caret /></BigLine></BigButton>
          </GroupBody>
          <Footer name="Edição" />
        </Group>
      </Ribbon>

      <FormulaBar>
        <NameBox>
          <NameInput aria-label="Caixa de nome" defaultValue="Q22" />
          <Caret color="#111" />
        </NameBox>
        <FormulaTools>
          <Icon width="14" height="14" viewBox="0 0 14 14">
            <circle cx="7.500" cy="7" r="6.200" fill="#dbe6f3" stroke="#aabbd2" />
            <path d="M5 7h5" stroke="#93a5bf" />
          </Icon>
          <FxButton aria-label="Inserir função">fx</FxButton>
        </FormulaTools>
        <FormulaInput aria-label="Barra de fórmulas" />
        <ExpandButton aria-label="Expandir barra de fórmulas">
          <Icon width="6" height="5" viewBox="0 0 6 5"><path d="M0.500 1L3 4l2.500-3" fill="none" stroke="#33425e" strokeWidth="1.400" /></Icon>
        </ExpandButton>
      </FormulaBar>

      <SheetArea>
        <GridViewport>
          <Grid>
            <colgroup>
              <Col $w={19} />
              <Col $w={120} />
              {letters.slice(1).map((l) => <Col key={l} $w={48} />)}
              <Col />
            </colgroup>
            <thead>
              <tr>
                <ColumnHead aria-label="Selecionar tudo">
                  <Icon width="18" height="14" viewBox="0 0 18 14"><path d="M16 3v9H7z" fill="#b3c3d8" /></Icon>
                </ColumnHead>
                {letters.map((l) => <ColumnHead key={l} scope="col" $active={l === "Q"}>{l}</ColumnHead>)}
                <ColumnHead />
              </tr>
            </thead>
            <tbody>
              {Array.from({ length: 27 }, (_, i) => <SheetRow key={i} n={i + 1} />)}
            </tbody>
          </Grid>
        </GridViewport>
        <VScroll>
          <SplitHandle />
          <ScrollButton aria-label="Rolar para cima"><Arrow dir="up" /></ScrollButton>
          <VThumb><Icon width="6" height="6" viewBox="0 0 6 6"><path d="M0 0.500h6M0 2.500h6M0 4.500h6" stroke="#5c7ba5" /></Icon></VThumb>
          <ScrollButton aria-label="Rolar para baixo"><Arrow dir="down" /></ScrollButton>
        </VScroll>
      </SheetArea>

      <BottomBar>
        <SheetTabs>
          {nav.map(([name, d]) => (
            <NavButton key={name} aria-label={name}>
              <Icon width="8" height="8" viewBox="0 0 8 8"><path d={d} fill="#3f5878" stroke="#3f5878" strokeWidth="0.600" /></Icon>
            </NavButton>
          ))}
          <Separator $h={12} />
          <SheetTab $w={31}>reg1</SheetTab>
          <SheetTab $w={31} $active>reg2</SheetTab>
          <Slant left="#fff" right="#cfdef0" />
          <SheetTab $w={30}>Sheet1</SheetTab>
          <Slant left="#cfdef0" right="#cfdef0" />
          <SheetTab $w={18} aria-label="Inserir planilha">
            <Icon width="11" height="9" viewBox="0 0 11 9">
              <path d="M3.500 2.500h7v6h-7z" fill="#fff" stroke="#6d87b5" />
              <path d="M2.500 0v5M0 2.500h5M0.700 0.700l3.600 3.600M4.300 0.700L0.700 4.300" stroke="#eb9a3c" />
            </Icon>
          </SheetTab>
          <Slant left="#cfdef0" right="#c3d6ec" />
        </SheetTabs>
        <HScroll>
          <SplitHandle $vertical />
          <ScrollButton aria-label="Rolar para a esquerda" $w={14}><Arrow dir="left" /></ScrollButton>
          <HThumb><Icon width="6" height="6" viewBox="0 0 6 6"><path d="M0.500 0v6M2.500 0v6M4.500 0v6" stroke="#5c7ba5" /></Icon></HThumb>
          <ScrollButton aria-label="Rolar para a direita"><Arrow dir="right" /></ScrollButton>
          <SplitHandle $vertical />
        </HScroll>
      </BottomBar>

      <StatusBar>
        <StatusText>Pronto</StatusText>
        <StatusRight>
          <ViewButton aria-label="Normal" $active><ViewIcon d="M0.500 0.500h9v7h-9zM3.500 0v8M6.500 0v8M0 3h10M0 5.500h10" /></ViewButton>
          <ViewButton aria-label="Layout da página"><ViewIcon d="M0.500 0.500h9v7h-9zM3 2.500h4v5H3z" /></ViewButton>
          <ViewButton aria-label="Quebra de página"><ViewIcon d="M0.500 0.500h9v7h-9zM3.500 0v5M6.500 0v5H0" /></ViewButton>
          <ZoomLabel htmlFor="zoom">100%</ZoomLabel>
          <RoundButton aria-label="Reduzir"><Icon width="6" height="6" viewBox="0 0 6 6"><path d="M0.500 3h5" stroke="#33425e" strokeWidth="1.300" /></Icon></RoundButton>
          <ZoomSlider id="zoom" type="range" min="10" max="190" defaultValue="100" />
          <RoundButton aria-label="Ampliar"><Icon width="6" height="6" viewBox="0 0 6 6"><path d="M0 3h6M3 0v6" stroke="#33425e" strokeWidth="1.300" /></Icon></RoundButton>
        </StatusRight>
      </StatusBar>
    </Window>
  );
}
